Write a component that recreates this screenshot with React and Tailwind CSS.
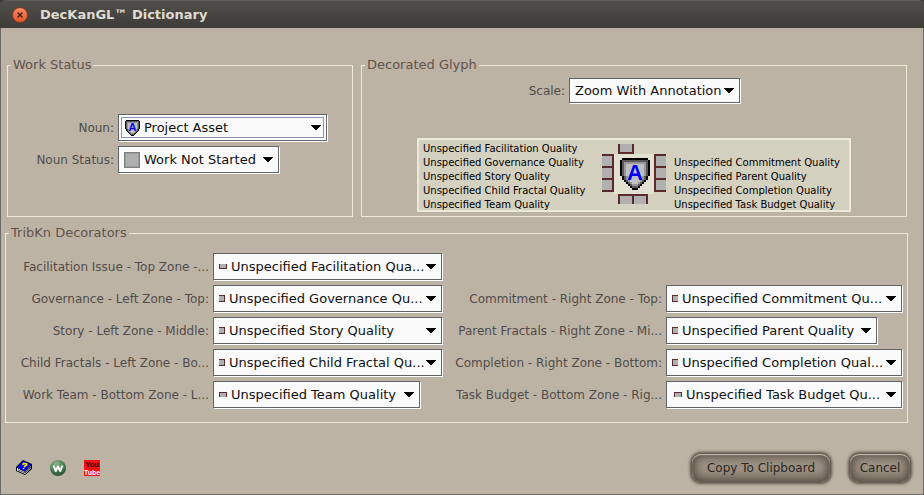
const FONT = "font-['DejaVu_Sans',Verdana,sans-serif]";

function Shield({ className }) {
  return (
    <svg className={className} viewBox="0 0 15 16" shapeRendering="crispEdges" aria-hidden="true">
      <path fill="#000" d="M1 0H14V1H15V9H14V11H13V12H12V13H11V14H10V15H9V16H6V15H5V14H4V13H3V12H2V11H1V9H0V1H1Z" />
      <path fill="#585858" d="M1 1H14V9H13V11H12V12H11V13H10V14H9V15H6V14H5V13H4V12H3V11H2V9H1Z" />
      <path fill="#989898" d="M2 2H13V9H12V11H11V12H10V13H9V14H6V13H5V12H4V11H3V9H2Z" />
      <path fill="#c0c0c0" d="M3 3H12V9H11V11H10V12H9V13H6V12H5V11H4V9H3Z" />
      <text x="7.5" y="11" textAnchor="middle" fontSize="11" fontWeight="700" fill="#0000f5" fontFamily="Liberation Sans, sans-serif">A</text>
    </svg>
  );
}

function StatusSquare({ className }) {
  return (
    <svg className={className} viewBox="0 0 16 16" shapeRendering="crispEdges" aria-hidden="true">
      <path fill="#808080" d="M0 0H16V16H0Z" />
      <path fill="#9a9a9a" d="M1 1H15V15H1Z" />
      <path fill="#b0b0b0" d="M2 2H14V14H2Z" />
    </svg>
  );
}

const zonePaths = {
  top: "M0 0H1V4H7V0H8V5H0Z",
  bottom: "M0 5V0H8V5H7V1H1V5Z",
  left: "M0 0H6V7H0V6H5V1H0Z",
  right: "M6 0H0V7H6V6H1V1H6Z",
};

function ZoneMark({ zone, className }) {
  const wide = zone === "top" || zone === "bottom";
  return (
    <svg className={className} width={wide ? 8 : 6} height={wide ? 5 : 7} shapeRendering="crispEdges" aria-hidden="true">
      <rect width={wide ? 8 : 6} height={wide ? 5 : 7} fill="#b0b0b0" />
      <path fill="#5c2a2c" d={zonePaths[zone]} />
    </svg>
  );
}

function Combo({ id, value, icon, padding, width, focused, height = "h-[27px]" }) {
  return (
    <div className={`relative mr-px mb-px max-w-full border border-[#606468] bg-[#fafafa] shadow-[1px_1px_0_#fff] ${height} ${width}`}>
      <select
        id={id}
        className={`block h-full w-full cursor-default appearance-none overflow-hidden border bg-transparent pr-4 text-[13px] text-clip whitespace-nowrap text-[#101010] outline-none ${padding} ${focused ? "border-white outline-1 -outline-offset-3 outline-[#8f8fb5] outline-solid" : "border-transparent"}`}
      >
        <option>{value}</option>
      </select>
      {icon && <span className="pointer-events-none absolute inset-y-0 left-0 flex items-center">{icon}</span>}
      <svg className="pointer-events-none absolute top-1/2 right-[5px] -mt-[3px]" width="10" height="5" shapeRendering="crispEdges" aria-hidden="true">
        <path d="M0 0H10V1H9V2H8V3H7V4H6V5H4V4H3V3H2V2H1V1H0Z" />
      </svg>
    </div>
  );
}

function Label({ htmlFor, children, className = "" }) {
  return (
    <label htmlFor={htmlFor} className={`text-right text-xs whitespace-nowrap text-[#504c4b] ${className}`}>
      {children}
    </label>
  );
}

function Group({ title, className = "", children }) {
  return (
    <fieldset className={`min-w-0 border border-[#ece9d4] ${className}`}>
      <legend className="ml-[3px] px-[2px] text-[13px] leading-4 text-[#62524e]">{title}</legend>
      {children}
    </fieldset>
  );
}

function Glyph() {
  return (
    <svg width="64" height="60" shapeRendering="crispEdges" role="img" aria-label="Decorated glyph">
      <rect x="12" y="10" width="40" height="40" fill="#e2e1d1" />
      <g fill="#b0b0b0">
        <rect x="16" width="16" height="10" />
        <rect y="10" width="12" height="38" />
        <rect x="52" y="10" width="12" height="38" />
        <rect x="16" y="50" width="30" height="10" />
      </g>
      <g fill="#5c2a2c">
        <path d="M16 0H18V8H30V0H32V10H16Z" />
        <path d="M0 10H12V48H0V46H10V36H0V34H10V24H0V22H10V12H0Z" />
        <path d="M64 10H52V48H64V46H54V36H64V34H54V24H64V22H54V12H64Z" />
        <path d="M16 60V50H46V60H44V52H32V60H30V52H18V60Z" />
      </g>
      <svg x="18" y="14" width="30" height="32">
        <Shield />
      </svg>
    </svg>
  );
}

const leftNotes = [
  "Unspecified Facilitation Quality",
  "Unspecified Governance Quality",
  "Unspecified Story Quality",
  "Unspecified Child Fractal Quality",
  "Unspecified Team Quality",
];
const rightNotes = [
  "Unspecified Commitment Quality",
  "Unspecified Parent Quality",
  "Unspecified Completion Quality",
  "Unspecified Task Budget Quality",
];

const rows = [
  [{ id: "facilitation", label: "Facilitation Issue - Top Zone -...", value: "Unspecified Facilitation Qua...", zone: "top" }, null],
  [
    { id: "governance", label: "Governance - Left Zone - Top:", value: "Unspecified Governance Qu...", zone: "left" },
    { id: "commitment", label: "Commitment - Right Zone - Top:", value: "Unspecified Commitment Qu...", zone: "right" },
  ],
  [
    { id: "story", label: "Story - Left Zone - Middle:", value: "Unspecified Story Quality", zone: "left" },
    { id: "parent", label: "Parent Fractals - Right Zone - Mi...", value: "Unspecified Parent Quality", zone: "right", width: "w-[211px]" },
  ],
  [
    { id: "child", label: "Child Fractals - Left Zone - Bo...", value: "Unspecified Child Fractal Qu...", zone: "left" },
    { id: "completion", label: "Completion - Right Zone - Bottom:", value: "Unspecified Completion Qual...", zone: "right" },
  ],
  [
    { id: "team", label: "Work Team - Bottom Zone - L...", value: "Unspecified Team Quality", zone: "bottom", width: "w-[207px]" },
    { id: "budget", label: "Task Budget - Bottom Zone - Rig...", value: "Unspecified Task Budget Qu...", zone: "bottom", inset: true },
  ],
];

function Decorator({ item }) {
  const wide = item.zone === "top" || item.zone === "bottom";
  const padding = item.inset ? "pl-[18px]" : wide ? "pl-4" : "pl-[14px]";
  return (
    <>
      <Label htmlFor={item.id}>{item.label}</Label>
      <Combo
        id={item.id}
        value={item.value}
        padding={padding}
        width={item.width || ""}
        icon={<ZoneMark zone={item.zone} className={item.inset ? "ml-[7px]" : "ml-[5px]"} />}
      />
    </>
  );
}

function DialogButton({ children, className }) {
  return (
    <button
      type="button"
      className={`h-7 rounded-[9px] bg-linear-to-b from-[#a3988a] to-[#94897b] text-xs text-[#292623] shadow-[0_0_3px_2px_#5c5148,inset_0_1px_1px_#cdbfb4,inset_0_0_10px_3px_#564a41] ${className}`}
    >
      {children}
    </button>
  );
}

function BookIcon() {
  return (
    <svg width="16" height="16" viewBox="0 0 16 16" aria-hidden="true">
      <path fill="#000" d="M7 0L16 4V9L9 15L0 11V7Z" />
      <path fill="#fff" d="M1 8L9 12L15 6V8L9 14L1 10.500Z" />
      <path stroke="#000" strokeWidth=".7" fill="none" d="M2 9.800L9 13L15 7" />
      <path fill="#0000f0" d="M7 1L15 4.500L9 11.500L1 7.500Z" />
      <path fill="none" stroke="#ffee00" strokeWidth="1.500" d="M6.500 4.800L7.500 3.500L10.500 3.800L10.800 5L8.600 6.300L8.300 7.200M7.800 8L7.500 9.200" />
    </svg>
  );
}

function WikiIcon() {
  return (
    <svg width="16" height="16" viewBox="0 0 16 16" aria-hidden="true">
      <defs>
        <radialGradient id="ball" cx="0.4" cy="0.25" r="0.8">
          <stop offset="0" stopColor="#8fb48d" />
          <stop offset="0.5" stopColor="#4d8455" />
          <stop offset="1" stopColor="#254a30" />
        </radialGradient>
      </defs>
      <circle cx="8" cy="8" r="8" fill="url(#ball)" />
      <path fill="none" stroke="#fff" strokeWidth="2" strokeLinejoin="round" d="M3.500 5.500L5.700 11L8 6.500L10.300 11L12.500 5.500" />
    </svg>
  );
}

function YouTubeIcon() {
  return (
    <svg width="16" height="16" viewBox="0 0 16 16" aria-hidden="true" fontFamily="Liberation Sans Narrow, Liberation Sans, sans-serif" fontWeight="700">
      <rect width="16" height="16" fill="#f80f14" />
      <text x="8" y="6.500" textAnchor="middle" fontSize="7.500" fill="#200">You</text>
      <text x="8" y="14.500" textAnchor="middle" fontSize="7" fill="#fff">Tube</text>
    </svg>
  );
}

export default function App() {
  return (
    <div className={`flex min-h-screen w-full flex-col bg-[#3c3b37] ${FONT}`}>
      <header className="flex h-7 items-center gap-3 rounded-t-md border-t border-[#5d5c57] bg-linear-to-b from-[#504f4a] to-[#3d3c38] pl-3">
        <button type="button" aria-label="Close" className="flex size-4 items-center justify-center rounded-full border border-[#8b3a1c] bg-linear-to-b from-[#f58a64] to-[#e4541f]">
          <svg width="6" height="6" viewBox="0 0 6 6" stroke="#3c1a0e" strokeWidth="1.300" aria-hidden="true">
            <path d="M.5 .5L5.500 5.500M5.500 .5L.5 5.500" />
          </svg>
        </button>
        <h1 className="text-[13px] leading-4 font-bold text-[#dfdbd2]">DecKanGL™ Dictionary</h1>
      </header>

      <main className="flex-1 border-x border-b border-[#6c6a68] bg-[#bdb3a4] pt-[29px]">
        <div className="mr-4 ml-[6px] grid grid-cols-[346fr_546fr] gap-2">
          <Group title="Work Status">
            <div className="grid grid-cols-[82px_auto] items-center justify-center gap-x-1 gap-y-1 pt-[41px] pb-[42px]">
              <Label htmlFor="noun">Noun:</Label>
              <Combo id="noun" value="Project Asset" focused padding="pl-6" width="w-[209px]" icon={<Shield className="ml-[6px] h-4 w-[15px]" />} />
              <Label htmlFor="status">Noun Status:</Label>
              <Combo id="status" value="Work Not Started" padding="pl-6" width="w-[161px]" icon={<StatusSquare className="ml-[5px] size-4" />} />
            </div>
          </Group>

          <Group title="Decorated Glyph">
            <div className="flex items-center justify-center gap-1 pt-[5px]">
              <Label htmlFor="scale" className="w-[38px]">Scale:</Label>
              <Combo id="scale" value="Zoom With Annotation" padding="pl-1" width="w-[171px]" height="h-[25px]" />
            </div>
            <div className="mx-auto mt-[34px] mb-1 flex h-[74px] w-[434px] border-2 border-[#ece9d8] bg-[#d5d1c1] pl-1 text-[10px] leading-[14px] text-black">
              <ul className="w-[179px] pt-[2px] whitespace-nowrap">
                {leftNotes.map((note) => <li key={note}>{note}</li>)}
              </ul>
              <div className="pt-1"><Glyph /></div>
              <ul className="pt-4 pl-2 whitespace-nowrap">
                {rightNotes.map((note) => <li key={note}>{note}</li>)}
              </ul>
            </div>
          </Group>
        </div>

        <Group title="TribKn Decorators" className="mt-2 mr-[15px] ml-1">
          <div className="grid grid-cols-[203px_230fr_215px_237fr] items-center gap-1 pt-3 pr-1 pb-[13px]">
            {rows.map(([left, right]) => (
              <div key={left.id} className="contents">
                <Decorator item={left} />
                {right ? <Decorator item={right} /> : <span className="col-span-2" />}
              </div>
            ))}
          </div>
        </Group>

        <footer className="mt-[31px] mr-[13px] mb-2 ml-[15px] flex items-center justify-between">
          <nav className="flex gap-[18px]">
            <a href="#help" aria-label="Help"><BookIcon /></a>
            <a href="#wiki" aria-label="Wiki"><WikiIcon /></a>
            <a href="#videos" aria-label="YouTube"><YouTubeIcon /></a>
          </nav>
          <div className="flex gap-5">
            <DialogButton className="w-[138px]">Copy To Clipboard</DialogButton>
            <DialogButton className="w-[60px]">Cancel</DialogButton>
          </div>
        </footer>
      </main>
    </div>
  );
}
